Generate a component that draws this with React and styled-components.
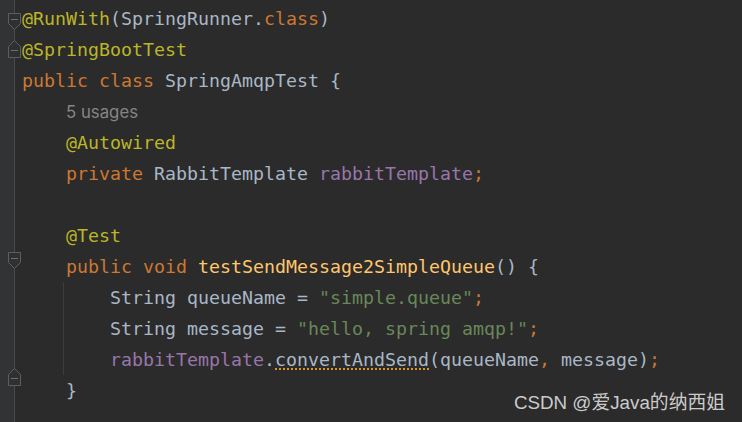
import React from "react";
import styled, { createGlobalStyle } from "styled-components";

const Global = createGlobalStyle`
  html, body { margin: 0; padding: 0; background: #2b2b2b; }
  #root { height: 100vh; }
`;

const C = {
  text: "#a9b7c6",
  kw: "#cc7832",
  ann: "#bbb529",
  fn: "#ffc66d",
  str: "#6a8759",
  field: "#9876aa",
  hint: "#858585",
};

const Editor = styled.div`
  position: relative;
  display: flex;
  height: 100vh;
  overflow: hidden;
  background: #2b2b2b;
`;

const Gutter = styled.div`
  width: 22px;
  flex: none;
  display: flex;
  flex-direction: column;
  padding-top: 3px;
  background: linear-gradient(
    to right,
    #313335 0 14px,
    #4b4b4b 14px 15px,
    #2b2b2b 15px
  );
`;

const GutterCell = styled.div`
  height: 31px;
  display: flex;
`;

const Code = styled.div`
  flex: 1;
  display: flex;
  flex-direction: column;
  padding-top: 3px;
  font-family: "DejaVu Sans Mono", "Liberation Mono", monospace;
  font-size: 18.27px;
  color: ${C.text};
  white-space: pre;
`;

const Line = styled.div`
  height: 31px;
  line-height: 31px;
  padding-left: ${(p) => (p.$indent || 0) * 44}px;
  ${(p) =>
    p.$guide &&
    `background: linear-gradient(#3c3c3c, #3c3c3c) no-repeat 41px 0 / 1px 100%;`}
`;

const Hint = styled.span`
  font-family: "Inter", "Noto Sans", sans-serif;
  font-size: 16.8px;
  color: ${C.hint};
`;

const T = styled.span`
  color: ${(p) => C[p.$c] || C.text};
`;

const Dotted = styled.span`
  display: inline-block;
  height: 31px;
  background-image: linear-gradient(to right, #d9972b 50%, transparent 50%);
  background-size: 4px 2px;
  background-repeat: repeat-x;
  background-position: 0 24px;
`;

const Watermark = styled.div`
  position: absolute;
  right: 17px;
  bottom: 8px;
  font-family: "Liberation Sans", "Noto Sans CJK SC", sans-serif;
  font-size: 18.8px;
  color: #cbcbcb;
  white-space: nowrap;
`;

const FoldDown = () => (
  <svg width="22" height="31" viewBox="0 0 22 31">
    <path
      d="M8.5 10.5 H20.5 V20.5 L14.5 26.5 L8.5 20.5 Z"
      fill="#2f3031"
      stroke="#5e5e5e"
      strokeWidth="1"
    />
    <path d="M11 16.5 H18" stroke="#6e6e6e" strokeWidth="1" />
  </svg>
);

const FoldUp = () => (
  <svg width="22" height="31" viewBox="0 0 22 31">
    <path
      d="M8.5 23.5 V12.5 L14.5 6.5 L20.5 12.5 V23.5 Z"
      fill="#2f3031"
      stroke="#5e5e5e"
      strokeWidth="1"
    />
    <path d="M11 16.5 H18" stroke="#6e6e6e" strokeWidth="1" />
  </svg>
);

const folds = {
  0: "down",
  1: "up",
  8: "down",
  12: "up",
};

export default function App() {
  const rows = 14;
  return (
    <>
      <Global />
      <Editor>
        <Gutter>
          {Array.from({ length: rows }).map((_, i) => (
            <GutterCell key={i}>
              {folds[i] === "down" && <FoldDown />}
              {folds[i] === "up" && <FoldUp />}
            </GutterCell>
          ))}
        </Gutter>
        <Code>
          <Line>
            <T $c="ann">@RunWith</T>(SpringRunner.<T $c="kw">class</T>)
          </Line>
          <Line>
            <T $c="ann">@SpringBootTest</T>
          </Line>
          <Line>
            <T $c="kw">public class </T>SpringAmqpTest {"{"}
          </Line>
          <Line $indent={1}>
            <Hint>5 usages</Hint>
          </Line>
          <Line $indent={1}>
            <T $c="ann">@Autowired</T>
          </Line>
          <Line $indent={1}>
            <T $c="kw">private </T>RabbitTemplate <T $c="field">rabbitTemplate</T>
            <T $c="kw">;</T>
          </Line>
          <Line />
          <Line $indent={1}>
            <T $c="ann">@Test</T>
          </Line>
          <Line $indent={1}>
            <T $c="kw">public void </T>
            <T $c="fn">testSendMessage2SimpleQueue</T>() {"{"}
          </Line>
          <Line $indent={2} $guide>
            String queueName = <T $c="str">"simple.queue"</T>
            <T $c="kw">;</T>
          </Line>
          <Line $indent={2} $guide>
            String message = <T $c="str">"hello, spring amqp!"</T>
            <T $c="kw">;</T>
          </Line>
          <Line $indent={2} $guide>
            <T $c="field">rabbitTemplate</T>.<Dotted>convertAndSend</Dotted>(queueName
            <T $c="kw">, </T>message)<T $c="kw">;</T>
          </Line>
          <Line $indent={1}>{"}"}</Line>
        </Code>
        <Watermark>CSDN @爱Java的纳西姐</Watermark>
      </Editor>
    </>
  );
}
